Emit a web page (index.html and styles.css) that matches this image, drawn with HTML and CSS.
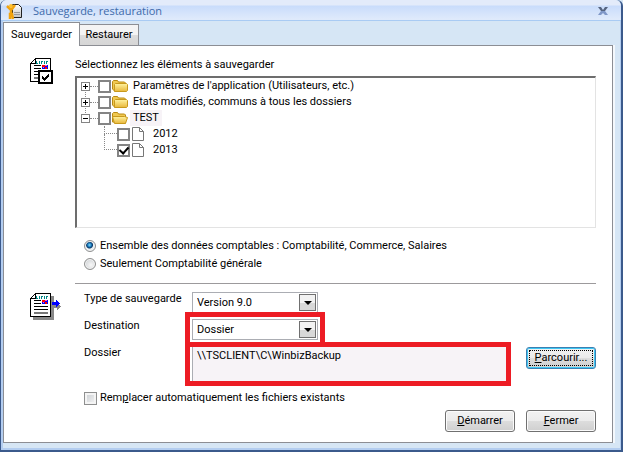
FILE: index.html
```html
<!DOCTYPE html>
<html lang="fr">
<head>
    <meta charset="UTF-8">
    <meta name="viewport" content="width=device-width, initial-scale=1.0">
    <title>Sauvegarde, restauration</title>
    <link rel="stylesheet" href="styles.css">
</head>
<body>
    <svg width="0" height="0" class="defs">
        <linearGradient id="gold" x1="0" y1="0" x2="0" y2="1">
            <stop offset="0" stop-color="#fff3a0"/>
            <stop offset="1" stop-color="#e8b73a"/>
        </linearGradient>
        <linearGradient id="page" x1="0" y1="0" x2="0" y2="1">
            <stop offset="0" stop-color="#fff"/>
            <stop offset="1" stop-color="#c4c4c4"/>
        </linearGradient>
        <symbol id="folder" viewBox="0 0 16 14">
            <path d="M.5 10V2.500l1-1h4l1 1.500h6l1 1V12l-1 .5H3z" fill="#f0c850" stroke="#b98a12"/>
            <path d="M2.500 12.500V5.500l1-1h11l1 1v6l-1 1z" fill="url(#gold)" stroke="#c8991c"/>
        </symbol>
        <symbol id="folder-open" viewBox="0 0 16 14">
            <path d="M.5 11V2.500l1-1h4l1 1.500h6l1 1V12z" fill="#f0c850" stroke="#b98a12"/>
            <path d="M2.500 12.500l-2-7h12l3 1-2 6z" fill="url(#gold)" stroke="#c8991c"/>
        </symbol>
        <symbol id="file" viewBox="0 0 12 14">
            <path d="M.5 .5h7l4 4v9H.5z" fill="#fff" stroke="#777"/>
            <path d="M7.500 .5v4h4" fill="none" stroke="#777"/>
        </symbol>
        <symbol id="sheet" viewBox="0 0 21 24">
            <path d="M5 0h16v24H0V5z" fill="#000"/>
            <path d="M6 1h14v22H1V6h5z" fill="#fff"/>
            <path d="M4 2h1v3H2V4h1V3h1z" fill="#fff"/>
            <path d="M6 3h1v2h1v1H6zM9 3h1v3H9zM11 3h2v1h-1v2h-1zM14 3h1v3h-1zM16 3h2v1h-1v2h-1z" fill="#088"/>
            <path d="M4 7h7v1H4zM4 10h7v1H4zM4 13h14v1H4zM4 16h14v1H4z" fill="#000"/>
            <path d="M4 19h14v2H4z" fill="#777"/>
            <path d="M12 7h6v4h-6z" fill="#00f"/>
            <path d="M12 7h3v2h-3zM15 9h2v2h-2z" fill="#f00"/>
            <path d="M15 7h2v1h-2zM13 9h1v1h-1z" fill="#f5c"/>
        </symbol>
    </svg>

    <div class="window">
        <header class="titlebar">
            <svg class="app-icon" width="17" height="17" viewBox="0 0 17 17">
                <path d="M6.500 1.500h6l3 3v10h-9z" fill="url(#page)" stroke="#222"/>
                <path d="M8 9.500h6M8 11.500h6" stroke="#999"/>
                <path d="M1 3l3 3h2l3-4M5 6v5M4 16V11h2l1 5" fill="none" stroke="#f2a20c" stroke-width="2.500"/>
                <circle cx="5" cy="3" r="2" fill="#ffc02d"/>
            </svg>
            <h1>Sauvegarde, restauration</h1>
            <button class="close" aria-label="Quitter">
                <svg width="10" height="9" viewBox="0 0 10 9">
                    <path d="M0 0h3l2 3 2-3h3L7 4H3z" fill="#56647f"/>
                    <path d="M3 4h4l3 4H7L5 6 3 8H0z" fill="#7f97c7"/>
                </svg>
            </button>
        </header>

        <nav class="tabs">
            <button class="tab active">Sauvegarder</button>
            <button class="tab">Restaurer</button>
        </nav>

        <main class="panel">
            <section class="section">
                <svg class="section-icon" width="31" height="28" viewBox="0 0 31 28" shape-rendering="crispEdges">
                    <use href="#sheet" width="21" height="24"/>
                    <path d="M8 12h15v14H8z" fill="#000"/>
                    <path d="M10 14h11v10H10z" fill="#fff"/>
                    <path d="M12 18h1v1h1v1h1v-1h1v-1h1v-1h1v-1h1v3h-1v1h-1v1h-1v1h-1v1h-1v-1h-1v-1h-1z" fill="#000"/>
                </svg>
                <div class="content">
                    <h2>Sélectionnez les éléments à sauvegarder</h2>
                    <ul class="tree">
                        <li>
                            <button class="toggle" aria-label="Ouvrir"></button><i class="dots"></i>
                            <input type="checkbox" id="params">
                            <svg width="16" height="14"><use href="#folder"/></svg>
                            <label for="params">Paramètres de l'application (Utilisateurs, etc.)</label>
                        </li>
                        <li>
                            <button class="toggle" aria-label="Ouvrir"></button><i class="dots"></i>
                            <input type="checkbox" id="etats">
                            <svg width="16" height="14"><use href="#folder"/></svg>
                            <label for="etats">Etats modifiés, communs à tous les dossiers</label>
                        </li>
                        <li>
                            <button class="toggle minus" aria-label="Fermer"></button><i class="dots"></i>
                            <input type="checkbox" id="test">
                            <svg width="16" height="14"><use href="#folder-open"/></svg>
                            <label for="test" class="selected">TEST</label>
                        </li>
                        <li class="child first">
                            <i class="dots"></i>
                            <input type="checkbox" id="y2012">
                            <svg width="12" height="14"><use href="#file"/></svg>
                            <label for="y2012">2012</label>
                        </li>
                        <li class="child">
                            <i class="dots"></i>
                            <input type="checkbox" id="y2013" checked>
                            <svg width="12" height="14"><use href="#file"/></svg>
                            <label for="y2013">2013</label>
                        </li>
                    </ul>
                    <div class="radios">
                        <label><input type="radio" name="scope" checked> Ensemble des données comptables : Comptabilité, Commerce, Salaires</label>
                        <label><input type="radio" name="scope"> Seulement Comptabilité générale</label>
                    </div>
                </div>
            </section>

            <section class="section">
                <svg class="section-icon lower" width="31" height="28" viewBox="0 0 31 28" shape-rendering="crispEdges">
                    <path d="M3 3h21v24H3z" fill="#888"/>
                    <use href="#sheet" width="21" height="24"/>
                    <path d="M23 12h4v-2h1v1h1v1h1v1h1v1h-1v1h-1v1h-1v1h-1v-2h-4z" fill="#888"/>
                    <path d="M22 9h4V7h1v1h1v1h1v1h1v1h-1v1h-1v1h-1v1h-1v-2h-4z" fill="#00f"/>
                </svg>
                <div class="content">
                    <div class="form">
                        <label for="type">Type de sauvegarde</label>
                        <div class="select">
                            <select id="type"><option>Version 9.0</option></select>
                            <span class="arrow"></span>
                        </div>
                        <label for="dest">Destination</label>
                        <div class="select highlight">
                            <select id="dest"><option>Dossier</option></select>
                            <span class="arrow"></span>
                        </div>
                        <label for="path">Dossier</label>
                        <div class="path-row">
                            <div class="path highlight">
                                <textarea id="path" spellcheck="false">\\TSCLIENT\C\WinbizBackup</textarea>
                            </div>
                            <button class="btn focused"><u>P</u>arcourir...</button>
                        </div>
                    </div>
                    <label class="replace"><input type="checkbox"><span>Rem<u>p</u>lacer automatiquement les fichiers existants</span></label>
                    <div class="actions">
                        <button class="btn"><u>D</u>émarrer</button>
                        <button class="btn"><u>F</u>ermer</button>
                    </div>
                </div>
            </section>
        </main>
    </div>
</body>
</html>
```
FILE: styles.css
```css
* {
    box-sizing: border-box;
}
body {
    margin: 0;
    background: #d6e6f5;
}
body, button, input, select, textarea {
    font-family: Roboto, "Liberation Sans", sans-serif;
    font-size: 11px;
    line-height: 16px;
    color: #000;
}
button {
    padding: 0;
    cursor: pointer;
}
.defs {
    position: absolute;
}
.window {
    display: flex;
    flex-direction: column;
    min-height: 100vh;
    padding: 0 8px 7px 2px;
    background: #d6e6f5;
    border: solid #3b5a8c;
    border-width: 0 2px 2px 1px;
    border-radius: 6px 6px 0 0;
    box-shadow: inset 2px -2px #b3cdf0, inset -1px 0 #b3cdf0;
}

/* title bar */
.titlebar {
    display: flex;
    align-items: center;
    height: 21px;
    margin: 0 -8px 0 -2px;
    padding: 2px 13px 0 5px;
    background: linear-gradient(#e3ebfa 0, #e3ebfa 5px, #c9dcfb 6px, #dfeafb 19px);
    border-bottom: 1px solid #a9cbf3;
    border-radius: 6px 6px 0 0;
}
.titlebar h1 {
    flex: 1;
    margin: 0 0 0 10px;
    font: 11px/14px "Open Sans", "Noto Sans", sans-serif;
    color: #3e6aaa;
}
.close {
    display: flex;
    background: none;
    border: 0;
}

/* tabs */
.tabs {
    display: flex;
    align-items: flex-end;
    height: 23px;
    margin-top: 1px;
}
.tab {
    width: 59px;
    height: 21px;
    background: linear-gradient(#f4f4f4 50%, #dcdcdc 50%, #d6d6d6);
    border: 1px solid #8c8e94;
    border-width: 1px 1px 0 0;
}
.tab.active {
    position: relative;
    width: 77px;
    height: 24px;
    margin-bottom: -1px;
    background: #fff;
    border-left-width: 1px;
}

.panel {
    flex: 1;
    padding: 11px 16px 10px 26px;
    background: #fff;
    border: 1px solid #8c8e94;
    box-shadow: 2px 0 #f4f8fc;
}
.section {
    display: flex;
}
.section-icon {
    flex: none;
    width: 31px;
    height: 28px;
    margin: 1px 14px 0 0;
}
.section-icon.lower {
    margin-top: 9px;
}
.content {
    flex: 1;
    min-width: 0;
}
.content h2 {
    margin: 0 0 3px;
    font-size: 11px;
    font-weight: normal;
    line-height: 16px;
}

/* tree */
.tree {
    min-height: 152px;
    margin: 0;
    padding: 0 4px;
    list-style: none;
    border: 2px solid #6d6d6d;
    border-right: 1px solid #e3e3e3;
    border-bottom: 1px solid #e3e3e3;
}
.tree li {
    position: relative;
    display: flex;
    align-items: center;
    height: 16px;
}
.tree li.child {
    margin-left: 23px;
}
.tree label {
    margin-left: 2px;
    padding: 0 3px;
}
.tree .child label {
    margin-left: 6px;
}
.tree .selected {
    background: #f7f3f7;
}
.tree svg {
    flex: none;
    margin-left: 1px;
}
.tree .child svg {
    margin-left: 2px;
}
.toggle {
    width: 9px;
    height: 9px;
    background:
        linear-gradient(#000, #000) center / 5px 1px no-repeat,
        linear-gradient(#000, #000) center / 1px 5px no-repeat,
        #fff;
    border: 1px solid #848484;
}
.toggle.minus {
    background: linear-gradient(#000, #000) center / 5px 1px no-repeat, #fff;
}
.dots {
    width: 8px;
    border-top: 1px dotted #888;
}
/* dotted line between two toggles */
.tree li:not(.child) + li:not(.child)::before {
    content: "";
    position: absolute;
    top: -4px;
    left: 4px;
    height: 7px;
    border-left: 1px dotted #888;
}
.child .dots {
    width: 13px;
    height: 16px;
    margin-top: -16px;
    border-top: 0;
    border-bottom: 1px dotted #888;
    border-left: 1px dotted #888;
}
.child.first .dots {
    height: 8px;
    margin-top: -8px;
}
input[type="checkbox"] {
    flex: none;
    display: grid;
    place-items: center;
    appearance: none;
    width: 13px;
    height: 13px;
    margin: 0;
    background: #fff;
    border: 2px solid #848484;
}
input[type="checkbox"]:checked::before {
    content: "";
    width: 4px;
    height: 7px;
    margin-top: -2px;
    border: solid #000;
    border-width: 0 2px 2px 0;
    transform: rotate(42deg);
}

/* radios */
.radios {
    display: flex;
    flex-direction: column;
    gap: 2px;
    padding: 10px 9px 11px;
    border-bottom: 1px solid #9c9a9c;
}
.radios label {
    display: flex;
    align-items: center;
    gap: 4px;
}
input[type="radio"] {
    appearance: none;
    width: 12px;
    height: 12px;
    margin: 0;
    background: radial-gradient(circle at 60% 60%, #f8f8f8, #c4c8cc);
    border: 1px solid #8e8f8f;
    border-radius: 50%;
    box-shadow: inset 0 0 0 1px #f4f4f4;
}
input[type="radio"]:checked {
    background: radial-gradient(circle at 45% 40%, #7fdcff 0, #1673b5 2px, #0a3766 3px, #e8eef2 4px);
}

/* form */
.form {
    display: grid;
    grid-template-columns: 99px 1fr;
    column-gap: 9px;
    row-gap: 6px;
    padding: 8px 0 0 9px;
}
.form > label {
    line-height: 14px;
    white-space: nowrap;
}
.select {
    position: relative;
    width: 126px;
    height: 21px;
}
.select select {
    appearance: none;
    width: 100%;
    height: 100%;
    padding: 0 20px 0 4px;
    background: #fff;
    border: 1px solid #abadb3;
    border-radius: 0;
}
.arrow {
    position: absolute;
    top: 2px;
    right: 2px;
    display: grid;
    place-items: center;
    width: 17px;
    height: 17px;
    background: linear-gradient(#f2f2f2 50%, #d8d8d8 50%);
    border: 1px solid #707070;
    pointer-events: none;
}
.arrow::before {
    content: "";
    border: 4px solid transparent;
    border-top-color: #000;
    border-bottom: 0;
}
.highlight {
    outline: 5px solid #ed1c24;
}
.select.highlight {
    outline-offset: 2px;
}
.path-row {
    display: flex;
    align-items: flex-start;
    gap: 20px;
    margin: 1px 0 0 -2px;
}
.path {
    flex: 1;
    height: 34px;
    padding-left: 2px;
}
.path textarea {
    display: block;
    width: 100%;
    height: 34px;
    padding: 1px 4px;
    background: #f7f3f7;
    border: 0;
    border-left: 1px solid #abadb3;
    outline: 0;
    resize: none;
}

.btn {
    width: 70px;
    height: 22px;
    background: linear-gradient(#f2f2f2, #ebebeb 50%, #dddddd 50%, #cfcfcf);
    border: 1px solid #707070;
    border-radius: 3px;
    box-shadow: inset 0 0 0 1px #fbfbfb;
}
.btn.focused {
    border-color: #3c7fb1;
    box-shadow: inset 0 0 0 1px #3fc8f4;
    outline: 1px dotted #000;
    outline-offset: -4px;
}
.replace {
    display: flex;
    align-items: center;
    gap: 3px;
    margin: 9px 0 0 9px;
}
.replace input {
    background: linear-gradient(135deg, #c8ccd0, #f6f6f6);
    border: 1px solid #8e8f8f;
    box-shadow: inset 0 0 0 2px #f4f4f4;
}
.actions {
    display: flex;
    justify-content: flex-end;
    gap: 11px;
    margin-top: 4px;
}
```
